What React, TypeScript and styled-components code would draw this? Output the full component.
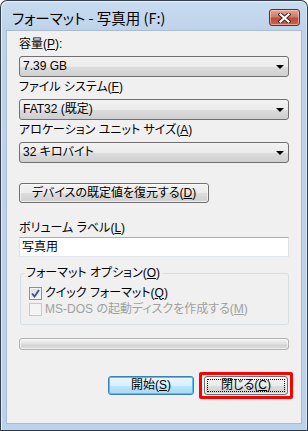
import React from "react";
import styled, { createGlobalStyle } from "styled-components";

const GlobalStyle = createGlobalStyle`
  html, body {
    margin: 0;
    padding: 0;
    background: #ffffff;
  }
  body {
    font-family: "Liberation Sans", "Noto Sans CJK JP", sans-serif;
    font-size: 12px;
    font-feature-settings: "palt";
    color: #000000;
  }
`;

interface CheckProps {
  checked?: boolean;
  disabled?: boolean;
}

const App = () => {
  return (
    <>
      <GlobalStyle />
      <Window>
        <TitleBar>
          <Title>フォーマット - 写真用 (F:)</Title>
          <CloseButton aria-label="閉じる">
            <svg width="13" height="10" viewBox="0 0 13 10">
              <path d="M2.5 1.5 L10.5 8.5 M10.5 1.5 L2.5 8.5" stroke="#4a1c1c" strokeWidth="4" strokeLinecap="square" />
              <path d="M2.5 1.5 L10.5 8.5 M10.5 1.5 L2.5 8.5" stroke="#ffffff" strokeWidth="2.2" strokeLinecap="square" />
            </svg>
          </CloseButton>
        </TitleBar>

        <Client>
          <Field>
            <Label>
              容量(<u>P</u>):
            </Label>
            <Combo>
              <span>7.39 GB</span>
              <Arrow />
            </Combo>
          </Field>
          <Field>
            <Label>
              ファイル システム(<u>F</u>)
            </Label>
            <Combo>
              <span>FAT32 (既定)</span>
              <Arrow />
            </Combo>
          </Field>
          <Field>
            <Label>
              アロケーション ユニット サイズ(<u>A</u>)
            </Label>
            <Combo>
              <span>32 キロバイト</span>
              <Arrow />
            </Combo>
          </Field>

          <ResetButton>
            デバイスの既定値を復元する(<u>D</u>)
          </ResetButton>

          <VolumeLabel>
            ボリューム ラベル(<u>L</u>)
          </VolumeLabel>
          <TextBox>写真用</TextBox>

          <GroupBox>
            <Legend>
              フォーマット オプション(<u>O</u>)
            </Legend>
            <CheckRow>
              <CheckBox checked>
                <svg width="9" height="9" viewBox="0 0 9 9">
                  <path d="M1 4.5 L3.5 7.5 L8 1" stroke="#3b4f8c" strokeWidth="1.8" fill="none" />
                </svg>
              </CheckBox>
              <span>
                クイック フォーマット(<u>Q</u>)
              </span>
            </CheckRow>
            <CheckRow disabled>
              <CheckBox disabled />
              <span>
                MS-DOS の起動ディスクを作成する(<u>M</u>)
              </span>
            </CheckRow>
          </GroupBox>

          <ProgressBar />

          <ButtonRow>
            <PushButton isDefault width={86}>
              <Caption>
                開始(<u>S</u>)
              </Caption>
            </PushButton>
            <Highlight>
              <PushButton width={84}>
                <Caption focused>
                  閉じる(<u>C</u>)
                </Caption>
              </PushButton>
            </Highlight>
          </ButtonRow>
        </Client>
      </Window>
    </>
  );
};

export default App;

const Window = styled.div`
  width: 308px;
  height: 431px;
  box-sizing: border-box;
  display: flex;
  flex-direction: column;
  padding: 0 6px 7px 6px;
  background: linear-gradient(180deg, #c8dbef 0px, #bed3ea 30px, #bcd2ea 100%);
  border: 1px solid #34404e;
  border-bottom-color: #2d3a48;
  border-radius: 7px 7px 0 0;
  box-shadow: inset 1px 1px 0 #e6eff8, inset -1px 0 0 #dbe7f4;
`;

const TitleBar = styled.div`
  height: 30px;
  display: flex;
  align-items: flex-start;
  justify-content: space-between;
  padding: 0 1px 0 5px;
`;

const Title = styled.div`
  margin-top: 8px;
  font-family: "Noto Sans CJK JP", sans-serif;
  font-size: 14.5px;
  line-height: 18px;
  color: #000000;
  white-space: nowrap;
`;

const CloseButton = styled.button`
  margin-top: 8px;
  width: 31px;
  height: 17px;
  padding: 0;
  display: flex;
  align-items: center;
  justify-content: center;
  border: 1px solid #6a2a2a;
  border-radius: 3px;
  background: linear-gradient(180deg, #e3a596 0%, #d27b6a 45%, #c04a38 55%, #c76450 100%);
  box-shadow: inset 0 0 0 1px rgba(255, 220, 210, 0.55);
`;

const Client = styled.div`
  flex: 1;
  display: flex;
  flex-direction: column;
  padding: 6px 12px 0 12px;
  background: #f0f0f0;
  box-shadow: 0 0 0 1px #a9bccf;
`;

const Field = styled.div`
  display: flex;
  flex-direction: column;
  gap: 4px;
  margin-bottom: 3px;
`;

const Label = styled.div`
  line-height: 15px;
  white-space: nowrap;
`;

const Combo = styled.div`
  height: 21px;
  box-sizing: border-box;
  display: flex;
  align-items: center;
  justify-content: space-between;
  padding: 0 4px 0 3px;
  border: 1px solid #707070;
  border-radius: 3px;
  background: linear-gradient(180deg, #f2f2f2 0%, #ebebeb 50%, #dddddd 51%, #cfcfcf 100%);
  line-height: 15px;
  white-space: nowrap;
`;

const Arrow = styled.span`
  width: 0;
  height: 0;
  border-left: 4px solid transparent;
  border-right: 4px solid transparent;
  border-top: 4px solid #000000;
  margin-top: 1px;
`;

const ResetButton = styled.button`
  margin-top: 17px;
  width: 190px;
  height: 20px;
  padding: 0;
  font: inherit;
  color: #000000;
  line-height: 15px;
  border: 1px solid #707070;
  border-radius: 3px;
  background: linear-gradient(180deg, #f2f2f2 0%, #ebebeb 50%, #dddddd 51%, #cfcfcf 100%);
  box-shadow: inset 0 0 0 1px rgba(255, 255, 255, 0.6);
  white-space: nowrap;
`;

const VolumeLabel = styled(Label)`
  margin-top: 18px;
  margin-bottom: 1px;
`;

const TextBox = styled.div`
  height: 20px;
  box-sizing: border-box;
  padding: 0 2px;
  display: flex;
  align-items: center;
  background: #ffffff;
  border: 1px solid #e3e9ef;
  border-top-color: #abadb3;
  border-left-color: #e2e3ea;
  border-right-color: #dbdfe6;
  line-height: 15px;
`;

const GroupBox = styled.fieldset`
  margin: 9px 0 0 1px;
  padding: 4px 7px 7px 8px;
  border: 1px solid #d5dfe5;
  border-radius: 3px;
  min-width: 0;
`;

const Legend = styled.legend`
  margin-left: -5px;
  padding: 0 2px;
  line-height: 15px;
  white-space: nowrap;
`;

const CheckRow = styled.div<CheckProps>`
  height: 16px;
  display: flex;
  align-items: center;
  gap: 3px;
  line-height: 15px;
  white-space: nowrap;
  color: ${({ disabled }) => (disabled ? "#a0a0a0" : "#000000")};
`;

const CheckBox = styled.span<CheckProps>`
  width: 13px;
  height: 13px;
  box-sizing: border-box;
  display: flex;
  align-items: center;
  justify-content: center;
  border: 1px solid ${({ disabled }) => (disabled ? "#c8c8c8" : "#8e8f8f")};
  background: ${({ disabled }) =>
    disabled ? "#f4f4f4" : "linear-gradient(135deg, #dcdcdc 0%, #f6f6f6 100%)"};
  box-shadow: inset 0 0 0 1px #f4f4f4;
`;

const ProgressBar = styled.div`
  margin-top: 13px;
  height: 12px;
  box-sizing: border-box;
  border: 1px solid #b2b2b2;
  border-radius: 3px;
  background: linear-gradient(180deg, #f3f3f3 0%, #e6e6e6 40%, #d4d4d4 60%, #dcdcdc 100%);
  box-shadow: inset 0 0 0 1px rgba(255, 255, 255, 0.5);
`;

const ButtonRow = styled.div`
  margin-top: 22px;
  margin-right: -4px;
  display: flex;
  justify-content: flex-end;
  align-items: center;
  gap: 5px;
`;

const PushButton = styled.button<{ isDefault?: boolean; width: number }>`
  width: ${({ width }) => width}px;
  height: 19px;
  padding: 2px;
  display: flex;
  align-items: stretch;
  font: inherit;
  color: #000000;
  border: 1px solid ${({ isDefault }) => (isDefault ? "#3c7fb1" : "#707070")};
  border-radius: 3px;
  background: ${({ isDefault }) =>
    isDefault
      ? "linear-gradient(180deg, #eaf6fd 0%, #d9f0fc 50%, #bee6fd 51%, #a7d9f5 100%)"
      : "linear-gradient(180deg, #f2f2f2 0%, #ebebeb 50%, #dddddd 51%, #cfcfcf 100%)"};
  box-shadow: inset 0 0 0 1px ${({ isDefault }) => (isDefault ? "#48c6f4" : "rgba(255,255,255,0.6)")};
  white-space: nowrap;
`;

const Caption = styled.span<{ focused?: boolean }>`
  flex: 1;
  display: flex;
  align-items: center;
  justify-content: center;
  line-height: 13px;
  border: 1px ${({ focused }) => (focused ? "dotted #000000" : "solid transparent")};
`;

const Highlight = styled.div`
  padding: 1px 2px;
  border: 3px solid #ff0000;
  border-radius: 2px;
  display: flex;
`;
